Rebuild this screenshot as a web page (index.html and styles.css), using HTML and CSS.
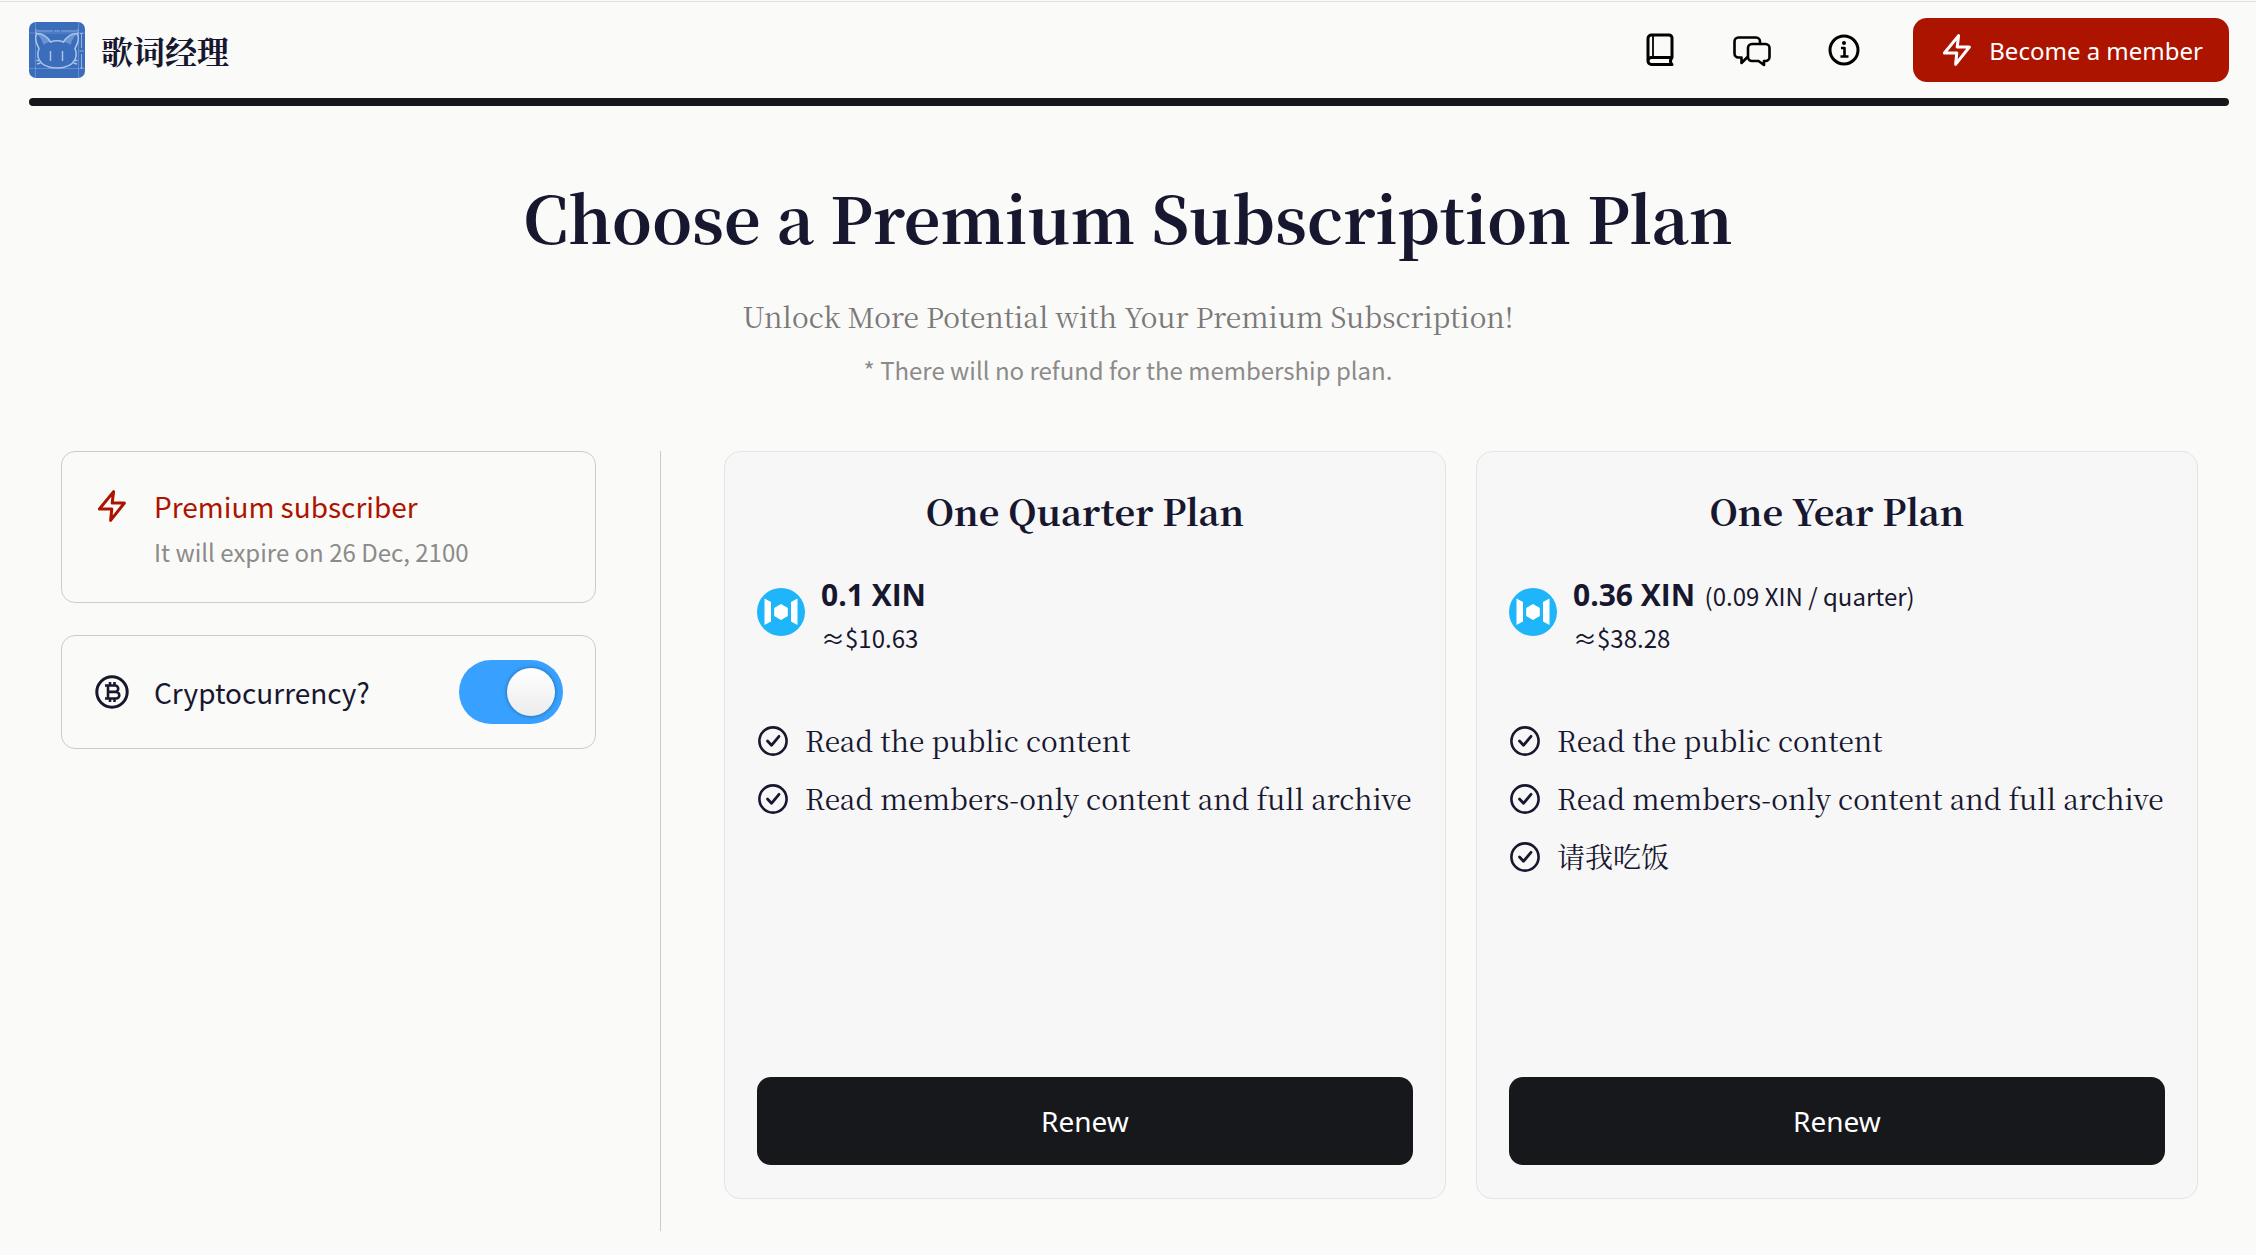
FILE: index.html
```html
<!DOCTYPE html>
<html lang="zh-CN">
<head>
  <meta charset="UTF-8" />
  <title>歌词经理</title>
  <link rel="stylesheet" href="styles.css">
</head>
<body>

  <!-- Shared icons -->
  <svg class="sprite" aria-hidden="true">
    <symbol id="bolt" viewBox="0 0 36 36">
      <path d="M19.600 3.600 18.200 15h12.200L16.600 32.400 17.800 21H5.400z" fill="none" stroke="currentColor" stroke-width="3" stroke-linejoin="round" />
    </symbol>
    <symbol id="check" viewBox="0 0 32 32">
      <circle cx="16" cy="17" r="13.600" fill="none" stroke="currentColor" stroke-width="2.600" />
      <path d="m10.500 17 4 4.300 7.500-9" fill="none" stroke="currentColor" stroke-width="2.800" stroke-linecap="round" stroke-linejoin="round" />
    </symbol>
    <symbol id="xin" viewBox="0 0 48 48">
      <circle cx="24" cy="24" r="24" fill="#1eb5fa" />
      <path d="m24 16 6.800 4v8L24 32l-6.800-4v-8zM7.500 10.500l6.500 3.500v19.500L7.500 37zM40.500 10.500 34 14v19.500l6.500 3.500z" fill="#fff" />
    </symbol>
  </svg>

  <header class="header">
    <a class="brand" href="#">
      <svg class="logo" viewBox="0 0 56 56" aria-hidden="true">
        <rect width="56" height="56" rx="7" fill="#3b6dbb" />
        <g fill="none" stroke="#a9c3ea">
          <path d="M6.500 0v56M49.500 0v56M0 11h56M0 46.500h56" stroke-width="0.800" opacity=".45" />
          <path d="M8 9h16M32 9h16M52.500 12v14M52.500 32v14M7 7v4M49 7v4M51 11.500h3M51 46h3M25 9h6M50.500 29h4" stroke-width="1" opacity=".8" />
          <path d="M7.500 11.500c6 .5 11 3.500 14 8-3 1-5 1.500-7 3.500-1-4-3-8-7-11.500zM48.500 11.500c-6 .5-11 3.500-14 8 3 1 5 1.500 7 3.500 1-4 3-8 7-11.500z" fill="#a9c3ea" fill-opacity=".45" stroke="none" />
          <path d="M7.500 11.500c-2 6 0 10 2.500 15-1.500 4-1.500 8 0 11 3 6 9 8.500 18 8.500s15-2.500 18-8.500c1.500-3 1.500-7 0-11 2.500-5 4.500-9 2.500-15-6 0-11 3.500-14 8.500-4-1.500-9-1.500-13 0-3-5-8-8.500-14-8.500z" stroke-width="1.600" />
          <path d="M21.500 29v10M33.500 29v10M7.500 38.500h3M8 42l3.500-1M48.500 38.500h-3M48 42l-3.500-1" stroke-width="1.500" />
        </g>
      </svg>
      <span>歌词经理</span>
    </a>
    <nav class="nav">
      <a href="#" aria-label="Archive">
        <svg class="nav-icon" viewBox="0 0 40 40">
          <path d="M32 27.500V8a3 3 0 0 0-3-3H11.500A3.500 3.500 0 0 0 8 8.500v22.500a3.500 3.500 0 0 0 3.500 3.500H32c-2-2-2-4.500 0-7H11.500A3.500 3.500 0 0 0 8 31" stroke-width="3" />
          <path d="M13 6v21" stroke-width="1.800" />
        </svg>
      </a>
      <a href="#" aria-label="Comments">
        <svg class="nav-icon" viewBox="0 0 40 40">
          <path d="M28 13v-1.500a4 4 0 0 0-4-4H6.500a4 4 0 0 0-4 4v12a4 4 0 0 0 4 4h3V33l6-6" />
          <path d="M20 14h13.500a4 4 0 0 1 4 4v9a4 4 0 0 1-4 4h-1.500v4l-5.500-4H20a4 4 0 0 1-4-4v-9a4 4 0 0 1 4-4z" />
        </svg>
      </a>
      <a href="#" aria-label="About">
        <svg class="nav-icon" viewBox="0 0 40 40">
          <circle cx="20" cy="20" r="14" stroke-width="3" />
          <path d="M17 18h3.500v8.500M16.500 26.500h8" />
          <circle cx="20" cy="13" r="2" fill="currentColor" stroke="none" />
        </svg>
      </a>
    </nav>
    <button class="member" type="button">
      <svg class="icon" aria-hidden="true"><use href="#bolt" /></svg>
      Become a member
    </button>
  </header>

  <main class="main">
    <div class="intro">
      <h1>Choose a Premium Subscription Plan</h1>
      <p class="lead">Unlock More Potential with Your Premium Subscription!</p>
      <p class="note">* There will no refund for the membership plan.</p>
    </div>

    <div class="content">
      <aside class="side">
        <div class="box status">
          <svg class="icon" aria-hidden="true"><use href="#bolt" /></svg>
          <div>
            <div class="status-title">Premium subscriber</div>
            <div class="status-date">It will expire on 26 Dec, 2100</div>
          </div>
        </div>
        <div class="box crypto">
          <svg class="icon" viewBox="0 0 36 36" fill="none" stroke="currentColor" stroke-width="3" aria-hidden="true">
            <circle cx="18" cy="18" r="15.200" />
            <path d="M11 11.500h10a3.200 3.200 0 0 1 0 6.400H14h8a3.300 3.300 0 0 1 0 6.600H11M14 11.500v13M16 8v3.500M20.500 8v3.500M16 24.500V28M20.500 24.500V28" stroke-width="2.600" />
          </svg>
          <label for="crypto">Cryptocurrency?</label>
          <input class="toggle" type="checkbox" id="crypto" checked />
        </div>
      </aside>

      <section class="plans">
        <article class="plan">
          <h2>One Quarter Plan</h2>
          <div class="price">
            <svg class="coin" aria-hidden="true"><use href="#xin" /></svg>
            <div class="price-text">
              <div><strong>0.1 XIN</strong></div>
              <div>≈$10.63</div>
            </div>
          </div>
          <ul class="features">
            <li><svg aria-hidden="true"><use href="#check" /></svg>Read the public content</li>
            <li><svg aria-hidden="true"><use href="#check" /></svg>Read members-only content and full archive</li>
          </ul>
          <button class="renew" type="button">Renew</button>
        </article>

        <article class="plan">
          <h2>One Year Plan</h2>
          <div class="price">
            <svg class="coin" aria-hidden="true"><use href="#xin" /></svg>
            <div class="price-text">
              <div><strong>0.36 XIN</strong> <span>(0.09 XIN / quarter)</span></div>
              <div>≈$38.28</div>
            </div>
          </div>
          <ul class="features">
            <li><svg aria-hidden="true"><use href="#check" /></svg>Read the public content</li>
            <li><svg aria-hidden="true"><use href="#check" /></svg>Read members-only content and full archive</li>
            <li><svg aria-hidden="true"><use href="#check" /></svg>请我吃饭</li>
          </ul>
          <button class="renew" type="button">Renew</button>
        </article>
      </section>
    </div>
  </main>

</body>
</html>
```

FILE: styles.css
```css
* {
  box-sizing: border-box;
}

body {
  margin: 0;
  padding-top: 1px;
  background: #fafaf8;
  color: #17172f;
  font-family: "Noto Sans CJK SC", sans-serif;
  font-size: 24px;
}

.sprite {
  position: absolute;
  width: 0;
  height: 0;
}

h1, h2, p, ul {
  margin: 0;
  padding: 0;
}

h1, h2, .brand, .lead, .features {
  font-family: "Noto Serif CJK SC", serif;
}

.icon {
  width: 36px;
  height: 36px;
  flex: none;
}

/* Header */
body::before {
  content: "";
  display: block;
  height: 1px;
  background: #e2e2e0;
}

.header {
  display: flex;
  align-items: center;
  margin: 0 27px 0 29px;
  padding: 16px 0;
  position: relative;
}

.header::after {
  content: "";
  position: absolute;
  left: 0;
  right: 0;
  top: 100%;
  height: 8px;
  border-radius: 4px;
  background: #17181c;
}

.brand {
  display: flex;
  align-items: center;
  gap: 16px;
  color: inherit;
  font-size: 32px;
  font-weight: 700;
  text-decoration: none;
}

.logo {
  width: 56px;
  height: 56px;
}

.nav {
  display: flex;
  gap: 52px;
  margin-left: auto;
  margin-right: 49px;
}

.nav a {
  display: flex;
  color: #000;
}

.nav-icon {
  width: 40px;
  height: 40px;
  fill: none;
  stroke: currentColor;
  stroke-width: 2.6;
  stroke-linejoin: round;
}

.member {
  display: flex;
  align-items: center;
  gap: 14px;
  height: 64px;
  padding: 0 26px;
  border: 0;
  border-radius: 14px;
  background: #ad1400;
  color: #fff;
  font-family: "Noto Sans", sans-serif;
  font-size: 24px;
  cursor: pointer;
}

/* Page heading */
.intro {
  padding: 70px 0 61px;
  text-align: center;
}

h1 {
  font-size: 64px;
  line-height: 96px;
  font-weight: 700;
}

.lead {
  margin-top: 28px;
  color: #7a7878;
  font-size: 28px;
  line-height: 48px;
}

.note {
  margin-top: 10px;
  color: #8c8a8a;
  line-height: 40px;
}

.content {
  display: flex;
  padding: 0 58px 24px 61px;
}

/* Left column */
.side {
  display: flex;
  flex-direction: column;
  gap: 32px;
  flex: 0 0 600px;
  padding-right: 64px;
  border-right: 1px solid #ccc;
}

.box {
  display: flex;
  gap: 24px;
  padding: 32px;
  border: 1px solid #ccc;
  border-radius: 14px;
  font-size: 28px;
}

.status {
  padding-bottom: 26px;
  color: #ad1400;
}

.status .icon {
  margin-top: 4px;
}

.status-title {
  line-height: 44px;
}

.status-date {
  color: #8c8a8a;
  font-size: 24px;
  line-height: 48px;
}

.crypto {
  align-items: center;
  padding: 24px 32px;
}

.toggle {
  appearance: none;
  width: 104px;
  height: 64px;
  margin: 0 0 0 auto;
  padding: 8px;
  border-radius: 32px;
  background: #ccc;
  cursor: pointer;
}

.toggle::before {
  content: "";
  display: block;
  width: 48px;
  height: 48px;
  border-radius: 50%;
  background: linear-gradient(#fff, #ececec);
  box-shadow: 0 0 4px rgba(0, 0, 0, 0.4);
}

.toggle:checked {
  background: #38a1ff;
}

.toggle:checked::before {
  margin-left: auto;
}

/* Plans */
.plans {
  display: grid;
  grid-template-columns: 1fr 1fr;
  gap: 30px;
  flex: 1;
  padding: 0 0 32px 63px;
}

.plan {
  display: flex;
  flex-direction: column;
  min-height: 748px;
  padding: 32px 32px 33px;
  border: 1px solid #e4e4e4;
  border-radius: 16px;
  background: #f7f7f7;
}

h2 {
  font-size: 36px;
  line-height: 54px;
  font-weight: 700;
  text-align: center;
}

.price {
  display: flex;
  align-items: center;
  gap: 16px;
  margin-top: 26px;
}

.price-text {
  padding-top: 10px;
  line-height: 42px;
}

.price strong {
  margin-right: 4px;
  font-family: "Open Sans", sans-serif;
  font-size: 30px;
  font-weight: 700;
}

.coin {
  width: 48px;
  height: 48px;
}

.features {
  display: flex;
  flex-direction: column;
  gap: 16px;
  margin-top: 60px;
  font-size: 28px;
  line-height: 42px;
  list-style: none;
}

.features li {
  display: flex;
  align-items: center;
  gap: 16px;
}

.features svg {
  width: 32px;
  height: 32px;
  flex: none;
}

.renew {
  height: 88px;
  margin-top: auto;
  border: 0;
  border-radius: 14px;
  background: #17181c;
  color: #fff;
  font-family: "Noto Sans", sans-serif;
  font-size: 28px;
  cursor: pointer;
}
```
